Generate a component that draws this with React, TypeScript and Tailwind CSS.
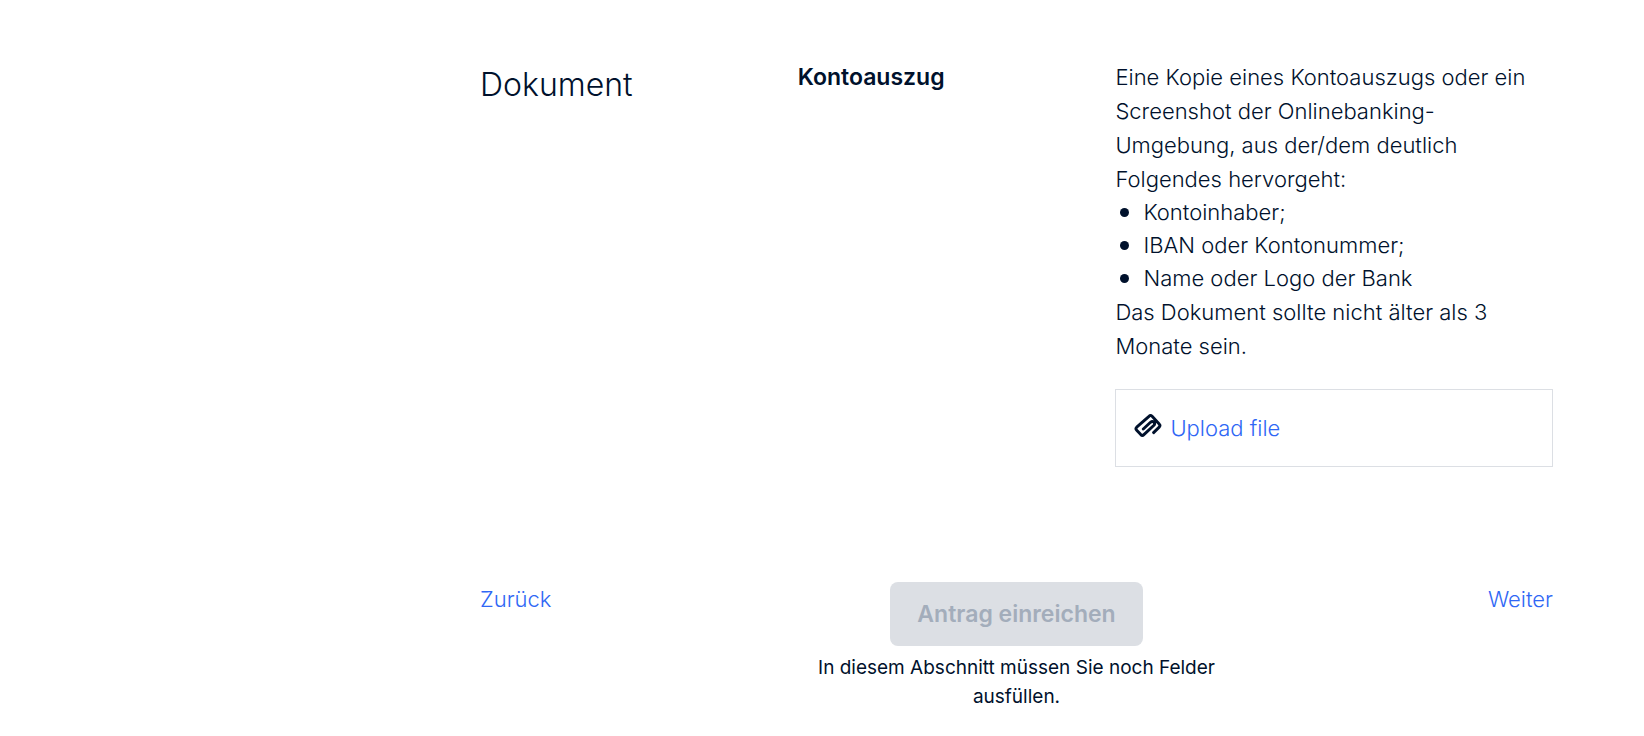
const requirements = ['Kontoinhaber;', 'IBAN oder Kontonummer;', 'Name oder Logo der Bank']

function PaperclipIcon() {
  return (
    <svg viewBox="0 0 28 26" className="h-[26px] w-7 shrink-0" fill="none" aria-hidden="true">
      <path
        d="M19.6 20.6l5.6-5.5c1.1-1.1 1.1-1.9 0-3L18.1 4.3c-1.1-1.1-2-1.1-3.1 0L2.7 15.2c-1.1 1.1-1.1 1.9 0 3L6.800 22.6c1.1 1.100 2 1.100 3.100 0l9.800-9.100c2.300-2.400-.7-5.300-3.200-3.200L9.300 17"
        stroke="currentColor"
        strokeWidth="2.9"
        strokeLinecap="round"
        strokeLinejoin="round"
      />
    </svg>
  )
}

function DocumentSection() {
  return (
    <section className="grid grid-cols-[2fr_2fr_3fr] gap-[26px]">
      <h1 className="pt-1 text-[32px] leading-[42px]">Dokument</h1>
      <h2 className="text-[23px] leading-[34px] font-semibold">Kontoauszug</h2>

      <div>
        <p>
          Eine Kopie eines Kontoauszugs oder ein Screenshot der Onlinebanking-Umgebung, aus der/dem
          deutlich Folgendes hervorgeht:
        </p>
        <ul className="leading-[33px]">
          {requirements.map((item) => (
            <li key={item} className="flex items-center gap-[14px] pl-[5px]">
              <span className="size-[9px] rounded-full bg-[#00112c]" />
              {item}
            </li>
          ))}
        </ul>
        <p>Das Dokument sollte nicht älter als 3 Monate sein.</p>

        <div className="mt-[26px] border border-[#dcdfe4] px-[18px] py-[21px]">
          <button type="button" className="flex cursor-pointer items-center gap-2 text-[#2f67f5]">
            <span className="pb-1.5 text-[#00112c]">
              <PaperclipIcon />
            </span>
            Upload file
          </button>
        </div>
      </div>
    </section>
  )
}

function FormFooter() {
  return (
    <footer className="mt-[115px] grid grid-cols-[1fr_430px_1fr]">
      <div>
        <a href="#zurueck" className="text-[#2f67f5]">
          Zurück
        </a>
      </div>
      <div className="flex flex-col items-center">
        <button
          type="button"
          disabled
          className="h-16 rounded-lg bg-[#dcdfe4] px-[27px] text-[23px] font-semibold text-[#a3adbb]"
        >
          Antrag einreichen
        </button>
        <p className="mt-[7px] text-center text-[19px] leading-[29px] font-normal">
          In diesem Abschnitt müssen Sie noch Felder ausfüllen.
        </p>
      </div>
      <div className="text-right">
        <a href="#weiter" className="text-[#2f67f5]">
          Weiter
        </a>
      </div>
    </footer>
  )
}

export default function App() {
  return (
    <main className="min-h-screen bg-white pt-15 pr-[91px] pb-6 pl-120 font-['Inter',sans-serif] text-[22px] leading-[34px] font-light text-[#00112c]">
      <DocumentSection />
      <FormFooter />
    </main>
  )
}
